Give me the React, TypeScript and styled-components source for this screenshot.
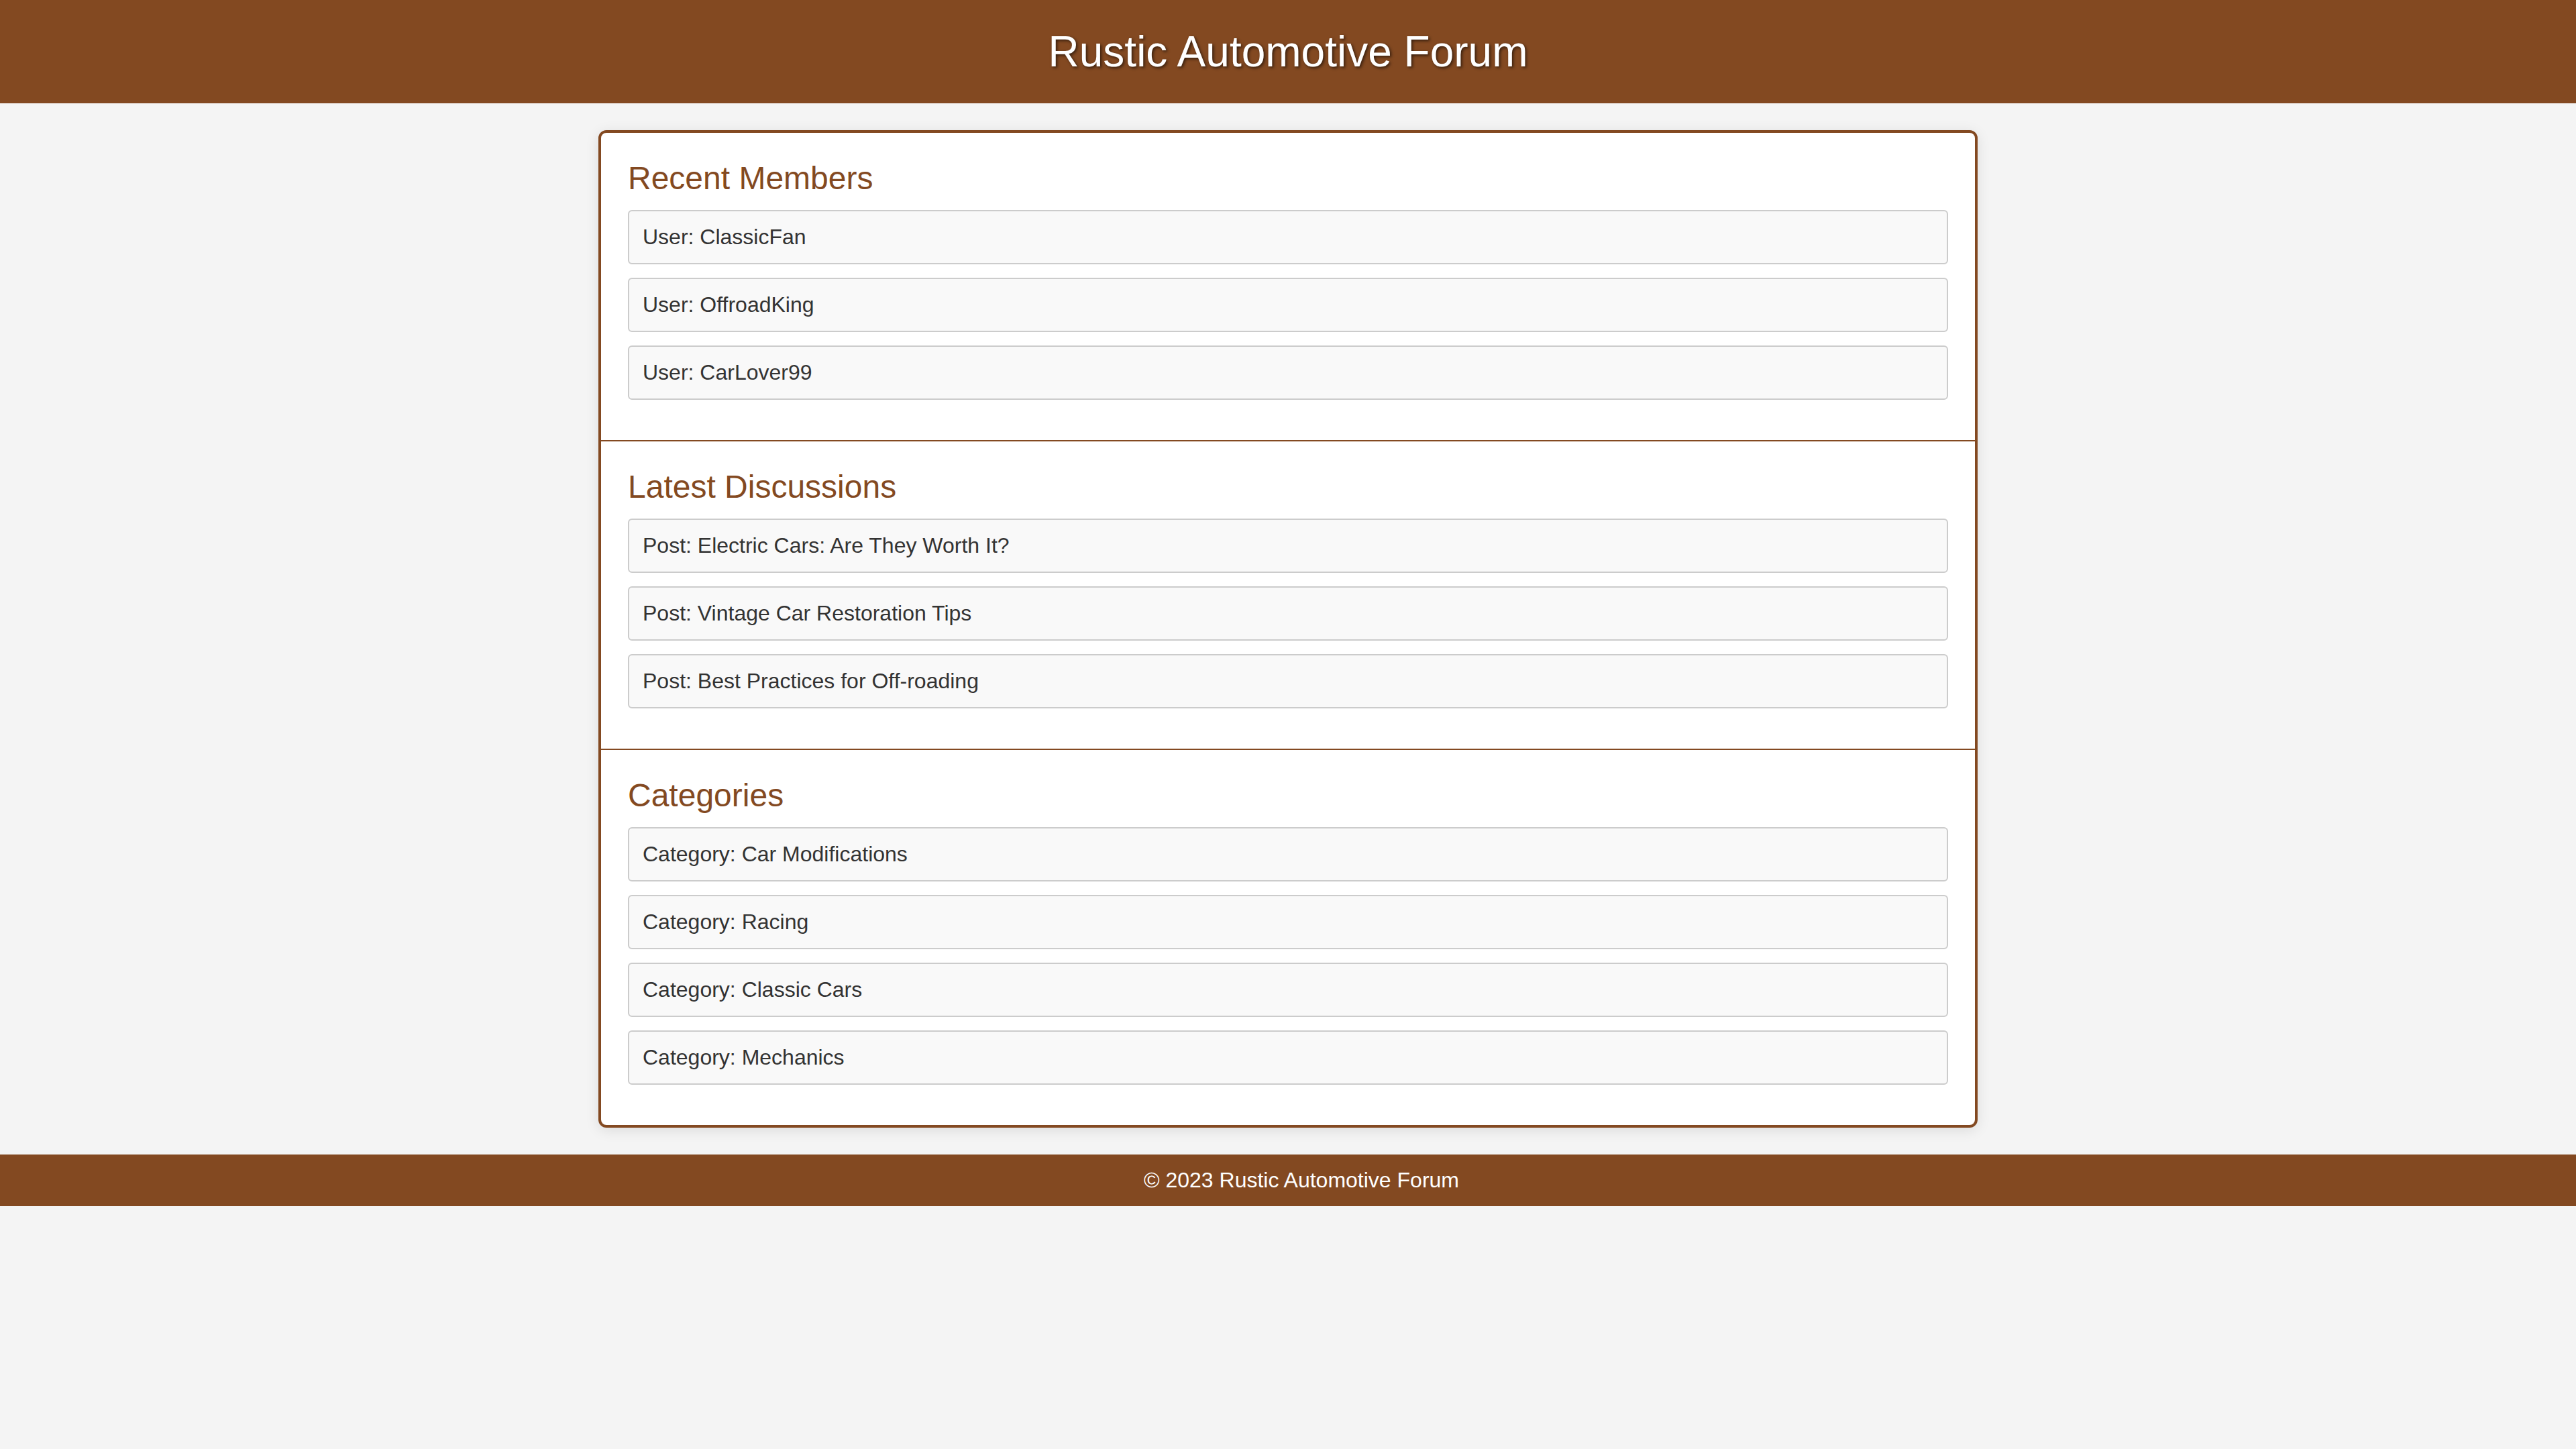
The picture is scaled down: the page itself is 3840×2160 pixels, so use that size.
import React from "react";
import styled, { createGlobalStyle } from "styled-components";

const BROWN = "#834921";

const GlobalStyle = createGlobalStyle`
  html, body {
    margin: 0;
    padding: 0;
    background: #f4f4f4;
    font-family: "Liberation Sans", Arial, Helvetica, sans-serif;
  }
`;

const Header = styled.header`
  background: ${BROWN};
  padding: 40px 0;
  text-align: center;
`;

const Title = styled.h1`
  margin: 0;
  font-size: 64px;
  font-weight: normal;
  color: #ffffff;
  text-shadow: 2px 2px 4px rgba(0, 0, 0, 0.6);
`;

const Card = styled.main`
  box-sizing: border-box;
  width: 2056px;
  margin: 40px auto;
  background: #ffffff;
  border: 4px solid ${BROWN};
  border-radius: 12px;
  box-shadow: 0 4px 20px rgba(0, 0, 0, 0.1);
  overflow: hidden;
`;

const Section = styled.section`
  padding: 40px;
  border-bottom: 2px solid ${BROWN};
  &:last-child {
    border-bottom: none;
  }
`;

const SectionTitle = styled.h2`
  margin: 0 0 20px;
  font-size: 48px;
  font-weight: normal;
  color: ${BROWN};
`;

const List = styled.ul`
  list-style: none;
  margin: 0;
  padding: 0;
`;

const Item = styled.li`
  background: #f9f9f9;
  border: 2px solid #cccccc;
  border-radius: 6px;
  padding: 20px;
  margin-bottom: 20px;
  font-size: 32px;
  color: #333333;
`;

const Footer = styled.footer`
  background: ${BROWN};
  color: #ffffff;
  text-align: center;
  padding: 20px 0 20px 40px;
  font-size: 32px;
`;

const sections: { title: string; items: string[] }[] = [
  {
    title: "Recent Members",
    items: ["User: ClassicFan", "User: OffroadKing", "User: CarLover99"],
  },
  {
    title: "Latest Discussions",
    items: [
      "Post: Electric Cars: Are They Worth It?",
      "Post: Vintage Car Restoration Tips",
      "Post: Best Practices for Off-roading",
    ],
  },
  {
    title: "Categories",
    items: [
      "Category: Car Modifications",
      "Category: Racing",
      "Category: Classic Cars",
      "Category: Mechanics",
    ],
  },
];

export default function App() {
  return (
    <>
      <GlobalStyle />
      <Header>
        <Title>Rustic Automotive Forum</Title>
      </Header>
      <Card>
        {sections.map((s) => (
          <Section key={s.title}>
            <SectionTitle>{s.title}</SectionTitle>
            <List>
              {s.items.map((it) => (
                <Item key={it}>{it}</Item>
              ))}
            </List>
          </Section>
        ))}
      </Card>
      <Footer>© 2023 Rustic Automotive Forum</Footer>
    </>
  );
}
